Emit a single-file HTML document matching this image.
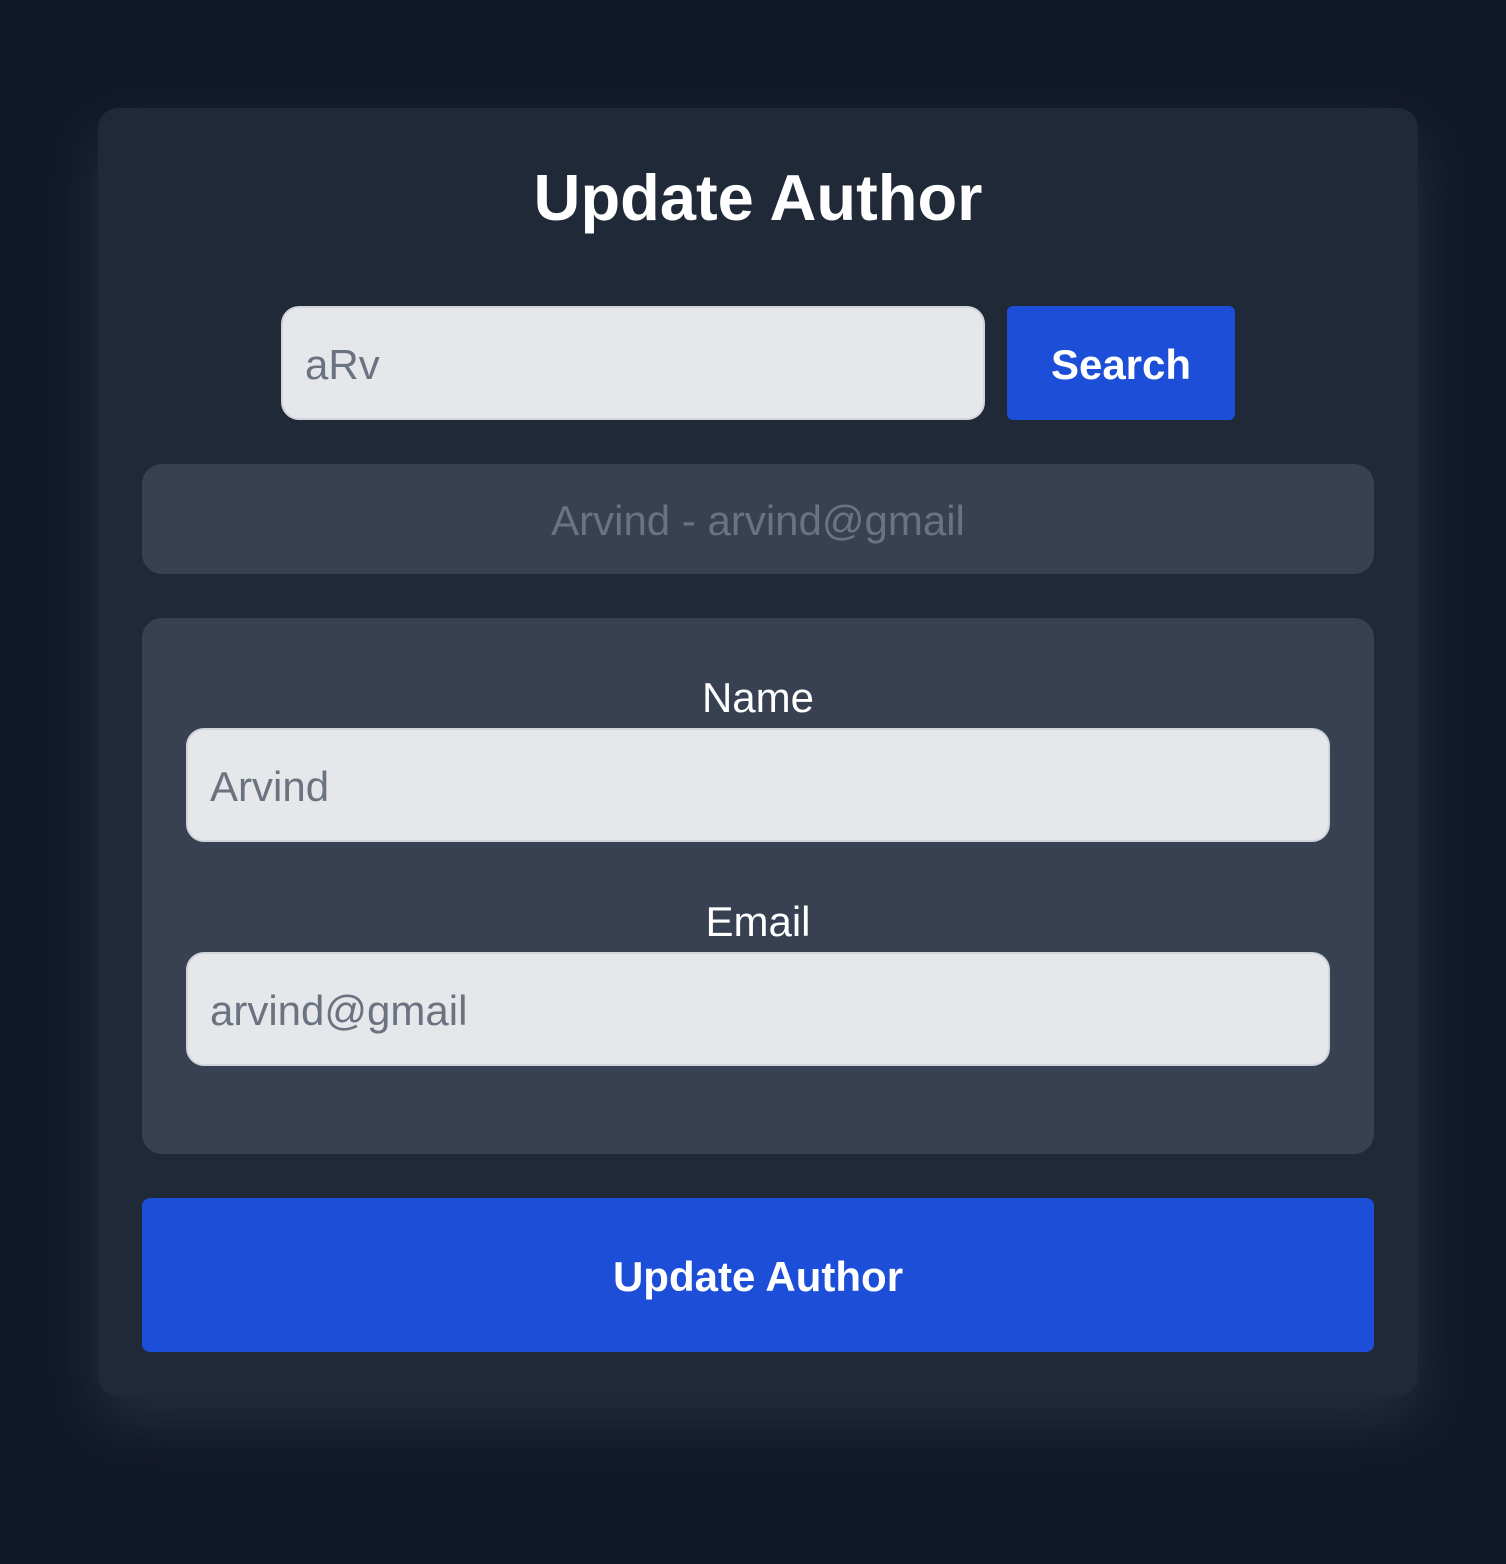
<!DOCTYPE html>
<html><head><style>
*{box-sizing:border-box;margin:0;padding:0}
body{width:1506px;height:1564px;background:#111827;font-family:"Liberation Sans",sans-serif;position:relative;overflow:hidden}
.card{position:absolute;left:98px;top:108px;width:1320px;height:1288px;background:#1f2937;border-radius:20px;box-shadow:0 25px 60px rgba(55,65,81,0.55)}
h1{position:absolute;left:98px;width:1320px;top:160px;text-align:center;color:#fff;font-size:65px;font-weight:bold;line-height:76px}
.inp{position:absolute;background:#e5e7eb;border:2px solid #d1d5db;border-radius:18px;color:#6b7280;font-size:42px;padding-left:22px;padding-top:4px;display:flex;align-items:center}
.btn{position:absolute;background:#1d4ed8;color:#fff;font-weight:bold;display:flex;align-items:center;justify-content:center;padding-top:4px}
.box{position:absolute;left:142px;width:1232px;background:#374151;border-radius:20px}
.lbl{position:absolute;left:98px;width:1320px;text-align:center;color:#fff;font-size:42px;line-height:50px}
</style></head><body>
<div class="card"></div>
<h1>Update Author</h1>
<div class="inp" style="left:281px;top:306px;width:704px;height:114px">aRv</div>
<div class="btn" style="left:1007px;top:306px;width:228px;height:114px;border-radius:6px;font-size:42px">Search</div>
<div class="box" style="top:464px;height:110px;display:flex;align-items:center;justify-content:center;color:#6b7280;font-size:42px;padding-top:4px">Arvind - arvind@gmail</div>
<div class="box" style="top:618px;height:536px"></div>
<div class="lbl" style="top:673px">Name</div>
<div class="inp" style="left:186px;top:728px;width:1144px;height:114px">Arvind</div>
<div class="lbl" style="top:897px">Email</div>
<div class="inp" style="left:186px;top:952px;width:1144px;height:114px">arvind@gmail</div>
<div class="btn" style="left:142px;top:1198px;width:1232px;height:154px;border-radius:8px;font-size:42px">Update Author</div>
</body></html>
